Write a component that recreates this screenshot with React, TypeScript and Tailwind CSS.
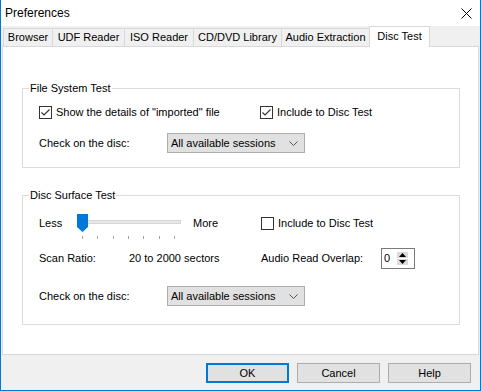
const tabs = [
  { label: "Browser", w: "w-[50px]" },
  { label: "UDF Reader", w: "w-[73px]" },
  { label: "ISO Reader", w: "w-[70px]" },
  { label: "CD/DVD Library", w: "w-[89px]" },
  { label: "Audio Extraction", w: "w-[89px]" },
];

function CheckBox({ checked }: { checked: boolean }) {
  return (
    <span className="flex h-[13px] w-[13px] shrink-0 items-center justify-center border border-[#333333] bg-white">
      {checked && (
        <svg width="11" height="11" viewBox="0 0 11 11">
          <path d="M1.5 5.5 4 8 9.5 2.5" fill="none" stroke="#333333" strokeWidth="1.2" />
        </svg>
      )}
    </span>
  );
}

function Combo() {
  return (
    <div className="flex h-[20px] w-[138px] items-center justify-between border border-[#adadad] bg-[#e1e1e1] pl-[3px] pr-[6px]">
      <span>All available sessions</span>
      <svg width="9" height="5" viewBox="0 0 9 5">
        <path d="M0.5 0.5 4.5 4.5 8.5 0.5" fill="none" stroke="#555555" />
      </svg>
    </div>
  );
}

function Slider() {
  const ticks = [6, 21, 37, 52, 67, 83, 98];
  return (
    <svg width="110" height="26" viewBox="0 0 110 26" className="shrink-0">
      <rect x="4.5" y="6.5" width="100" height="3" fill="#e7e7e7" stroke="#d6d6d6" />
      {ticks.map((t) => (
        <line key={t} x1={t + 0.5} y1="22" x2={t + 0.5} y2="25" stroke="#a0a0a0" />
      ))}
      <path d="M1 0H12V13L6.5 18L1 13Z" fill="#0078d7" />
    </svg>
  );
}

function Spin() {
  return (
    <div className="flex h-[21px] w-[34px] items-center justify-between border border-[#7a7a7a] bg-white pl-[2px] pr-[6px]">
      <span>0</span>
      <div className="flex flex-col">
        <span className="flex h-[6px] w-[11px] items-center justify-center bg-[#dadada]">
          <svg width="7" height="4" viewBox="0 0 7 4">
            <path d="M0 4 3.5 0 7 4Z" fill="#000" />
          </svg>
        </span>
        <span className="mt-px flex h-[6px] w-[11px] items-center justify-center bg-[#dadada]">
          <svg width="7" height="4" viewBox="0 0 7 4">
            <path d="M0 0 3.5 4 7 0Z" fill="#000" />
          </svg>
        </span>
      </div>
    </div>
  );
}

function Button({ label, primary }: { label: string; primary?: boolean }) {
  return (
    <button
      className={
        primary
          ? "flex h-[20px] w-[83px] items-center justify-center border-2 border-[#0078d7] bg-[#e1e1e1]"
          : "flex h-[20px] w-[83px] items-center justify-center border border-[#adadad] bg-[#e1e1e1]"
      }
    >
      {label}
    </button>
  );
}

export default function App() {
  return (
    <div className="flex h-[391px] w-[481px] flex-col border-x border-b border-[#0078d7] bg-[#f0f0f0] font-['Liberation_Sans',Arial,sans-serif] text-[11px] leading-[13px] text-black">
      <div className="flex h-[26px] shrink-0 items-center justify-between bg-white pl-[4px] pr-[8px]">
        <span className="text-[12px]">Preferences</span>
        <svg width="11" height="11" viewBox="0 0 11 11">
          <path d="M0.5 0.5 10.5 10.5M10.5 0.5 0.5 10.5" stroke="#000" strokeWidth="1" />
        </svg>
      </div>

      <div className="relative z-10 flex h-[20px] shrink-0 items-end pl-[2px]">
        {tabs.map((t, i) => (
          <div
            key={t.label}
            className={`flex h-[18px] items-center justify-center border-x border-t border-[#d9d9d9] bg-[#f0f0f0] ${t.w} ${i > 0 ? "-ml-px" : ""}`}
          >
            {t.label}
          </div>
        ))}
        <div className="-mb-px -ml-px flex h-[21px] w-[61px] items-start justify-center border-x border-t border-[#d9d9d9] bg-white pt-[3px]">
          Disc Test
        </div>
      </div>

      <div className="mx-px h-[309px] shrink-0 border border-[#d9d9d9] bg-white">
        <fieldset className="ml-[19px] mt-[35px] w-[438px] border border-[#dcdcdc] pb-[14px] pl-[16px]">
          <legend className="-ml-[10px] px-px">File System Test</legend>
          <div className="mt-[10px] flex h-[14px] items-center">
            <div className="flex w-[221px] items-center gap-[4px]">
              <CheckBox checked />
              <span>Show the details of "imported" file</span>
            </div>
            <div className="flex items-center gap-[4px]">
              <CheckBox checked />
              <span>Include to Disc Test</span>
            </div>
          </div>
          <div className="mt-[14px] flex h-[20px] items-center">
            <span className="w-[128px]">Check on the disc:</span>
            <Combo />
          </div>
        </fieldset>

        <fieldset className="ml-[19px] mt-[21px] w-[438px] border border-[#dcdcdc] pb-[18px] pl-[16px]">
          <legend className="-ml-[10px] px-px">Disc Surface Test</legend>
          <div className="mt-[12px] flex h-[26px] items-start">
            <span className="flex h-[18px] w-[37px] items-center">Less</span>
            <Slider />
            <span className="ml-[7px] flex h-[18px] w-[68px] items-center">More</span>
            <div className="flex h-[18px] items-center gap-[4px]">
              <CheckBox checked={false} />
              <span>Include to Disc Test</span>
            </div>
          </div>
          <div className="mt-[8px] flex h-[21px] items-center">
            <span className="w-[90px]">Scan Ratio:</span>
            <span className="w-[132px]">20 to 2000 sectors</span>
            <span className="w-[120px]">Audio Read Overlap:</span>
            <Spin />
          </div>
          <div className="mt-[17px] flex h-[20px] items-center">
            <span className="w-[128px]">Check on the disc:</span>
            <Combo />
          </div>
        </fieldset>
      </div>

      <div className="mt-[8px] flex justify-end gap-[8px] pr-[9px]">
        <Button label="OK" primary />
        <Button label="Cancel" />
        <Button label="Help" />
      </div>
    </div>
  );
}
